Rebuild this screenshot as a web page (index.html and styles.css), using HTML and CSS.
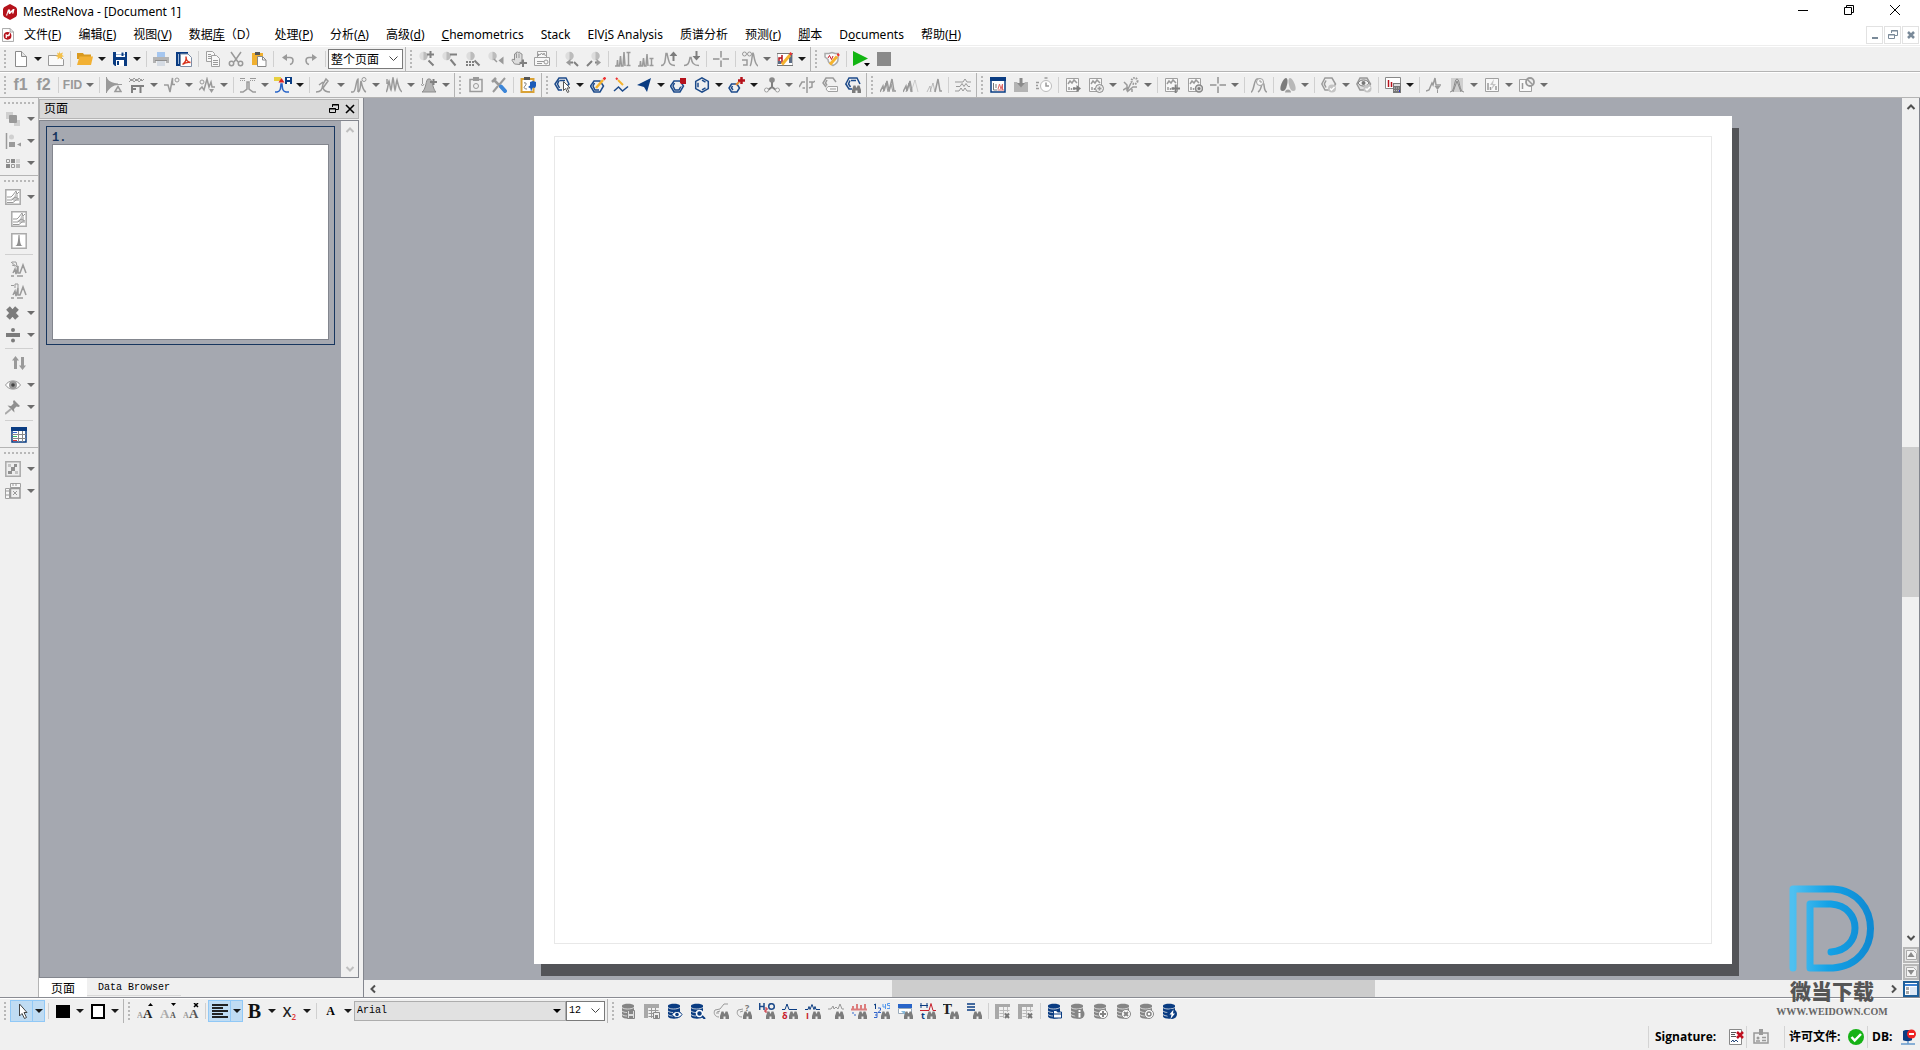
FILE: index.html
```html
<!DOCTYPE html>
<html lang="zh-CN">
<head>
<meta charset="utf-8">
<title>MestReNova - [Document 1]</title>
<link rel="stylesheet" href="styles.css">
</head>
<body>
<svg class="defs" aria-hidden="true">
<symbol id="logo" viewBox="0 0 16 16"><path fill="#b5121b" d="M8 0l6 3.300 1 1.700v6l-1 1.700L8 16l-6-3.300L1 11V5l1-1.700z"/><path fill="#fff" d="M4 11.500l2-6h2l.5 2 2.500-2.500h1.500l-1 4.500H10l.5-2L8 10H7l-.8-2-1 3.500z"/></symbol>
<symbol id="doclogo" viewBox="0 0 14 16"><path fill="#fff" stroke="#999" d="M.5.5h9l4 4v11H.5z"/><path fill="none" stroke="#999" d="M9.500.5v4h4"/><circle cx="6.500" cy="9" r="4.500" fill="#b5121b"/><path stroke="#fff" stroke-width="1.500" fill="none" d="M5 11.500V8l2 1 1.500-2v2"/></symbol>
<symbol id="bino" viewBox="0 0 16 16"><path fill="#7c7c7c" d="M7 16v-3l1.500-4.500h2l.6 2h.8l.6-2h2L16 13v3h-3.500v-2.500h-2V16z"/></symbol>
<symbol id="new" viewBox="0 0 16 16"><path fill="#fff" stroke="#8a8a8a" d="M2.500.5h6l5 5v10h-11z"/><path fill="#e4e4e4" stroke="#8a8a8a" d="M8.500.5v5h5"/></symbol>
<symbol id="newpage" viewBox="0 0 16 16"><path fill="#fafafa" stroke="#999" d="M.5 4.500h11l4 4v6H.5z"/><path fill="#f4c04a" d="M11 0l1.200 2.500L15 1.500 14 4l2 1.200-2.500.8.5 2.500L11.500 7 9.500 8.500 9.800 6 7.500 5l2.300-1-.8-2.500L11 2.500z"/></symbol>
<symbol id="open" viewBox="0 0 16 16"><path fill="#d99a20" d="M0 2h6l1 1.500h7V8H0z"/><path fill="#f2b134" d="M2.500 5.500H16l-2 8.500H0z"/></symbol>
<symbol id="save" viewBox="0 0 16 16"><path fill="#0a3c82" d="M1 1h14v14H3l-2-2z"/><path fill="#fff" d="M4 1h9v5H4zM4 9h8v6H4z"/><path fill="#9db6d6" d="M4 3h9v1H4z"/><path fill="#0a3c82" d="M9.500 1.500h2V5h-2zM5 10h2v4H5z"/></symbol>
<symbol id="print" viewBox="0 0 16 16"><path fill="#a5c6ef" d="M4 1h8v5H4z"/><path fill="#b4b4b4" d="M0 6h16v6h-3v-2H3v2H0z"/><path fill="#8f8f8f" d="M2 9h12v1H2z"/><path fill="#d5dbe3" d="M4 10h8v5H4z"/></symbol>
<symbol id="pdf" viewBox="0 0 16 16"><path fill="#0a3c82" d="M0 1h12v14H0z"/><path fill="#fff" d="M4.500 3H12l3.500 3.500v9h-11z"/><path fill="none" stroke="#7d8da5" d="M4.500 3H12l3.500 3.500v9h-11z"/><path fill="none" stroke="#d8331d" stroke-width="1.400" d="M6.500 13.500c3-2 4-5 3.500-8 0 3 1.500 5.500 4.500 6-3-.5-5 0-8 2z"/><path fill="#9db6d6" d="M2 3h1v10H2z"/></symbol>
<symbol id="copy" viewBox="0 0 16 16"><path class="gw" d="M1.500.5h6l2 2v8h-8z"/><path class="gw" d="M6.500 4.500h5l3 3v8h-8z"/><path class="g" d="M8 9.500h5M8 11.500h5M8 13.500h5M3 3.500h3M3 5.500h3M3 7.500h3"/></symbol>
<symbol id="cut" viewBox="0 0 16 16"><path class="g2" d="M3 1l7 10M13 1L6 11"/><circle class="g2" cx="3.500" cy="12.500" r="2.200"/><circle class="g2" cx="12.500" cy="12.500" r="2.200"/></symbol>
<symbol id="paste" viewBox="0 0 16 16"><path fill="#f0b030" d="M1 2h11v12H1z"/><path fill="#555" d="M4 1h5v3H4z"/><path fill="#fff" stroke="#888" d="M6.500 5.500h5l3.500 3.500v6.500H6.500z"/><path fill="none" stroke="#888" d="M11.500 5.500V9H15"/></symbol>
<symbol id="undo" viewBox="0 0 16 16"><path class="g2" d="M4 6.500h6c4 0 4 5.500 0 7"/><path class="gf" d="M2 6.500L7 3v7z"/></symbol>
<symbol id="redo" viewBox="0 0 16 16"><path class="g2" d="M12 6.500H6c-4 0-4 5.500 0 7"/><path class="gf" d="M14 6.500L9 3v7z"/></symbol>
<symbol id="lens" viewBox="0 0 16 16"><circle cx="4.500" cy="5" r="4.200" fill="#ddd"/><path fill="#bcbcbc" d="M4.500.8a4.200 4.200 0 010 8.400z"/></symbol>
<symbol id="zin" viewBox="0 0 16 16"><use href="#lens"/><path class="g3" d="M8 3.500h7M11.500 0v7M9.500 9.500l5 5"/></symbol>
<symbol id="zout" viewBox="0 0 16 16"><use href="#lens"/><path class="g3" d="M8 3.500h7M8.500 8.500l5 6"/></symbol>
<symbol id="zsel" viewBox="0 0 16 16"><use href="#lens" x="1"/><path class="g3" stroke-dasharray="2 1" d="M1 11h8M1 14h8"/><path class="g3" d="M9.500 9.500l5 5"/></symbol>
<symbol id="zprev" viewBox="0 0 16 16"><use href="#lens"/><path class="g2" d="M6 8l3 3"/><path class="gf" d="M10.500 9.500l5-4v8z"/></symbol>
<symbol id="hand" viewBox="0 0 16 16"><path fill="#ddd" stroke="#8f8f8f" d="M3.500 13L.8 9l1-1L3.500 9V3l1.500-.5V1.500L6.500 1l.7.5 1.300-.5 1 1.500 1.500.5v6l-2 4.500z"/><path class="g" d="M5.500 2.500V7M8 2.500V7"/><path class="g3" d="M8.500 12H16M12 8.500V16"/></symbol>
<symbol id="zpage" viewBox="0 0 16 16"><path class="gw" d="M3.500.5h9v8h-9z"/><path class="gw" d="M.5 6.500h15v8H.5z"/><path class="g" d="M4.500 5V3l1.500 1 1.500-2L9 4l1-2 1.500 3M3 10.500h7M3 12.500h5"/><circle class="g" cx="12" cy="11" r="2"/></symbol>
<symbol id="zl" viewBox="0 0 16 16"><use href="#lens" x="2"/><path class="g3" d="M11 11l4 4M6 11.500h4"/><path class="gf" d="M3 11.500L7.500 8v7z"/></symbol>
<symbol id="zr" viewBox="0 0 16 16"><use href="#lens" x="5"/><path class="g3" d="M1 15l5-5M9 11.500h3"/><path class="gf" d="M15 11.500L10.500 8v7z"/></symbol>
<symbol id="pkup" viewBox="0 0 16 16"><path class="g2" d="M0 15h2l.5-6 .5 6h1.500L5.500 5l1 10H8L9 1l1 14"/><path class="g2" d="M11.500 1.500h4M13.500 1.500v13M11.500 14.500h4"/></symbol>
<symbol id="pkdn" viewBox="0 0 16 16"><path class="g2" d="M0 15h2l.5-5 .5 5h1.500L5.500 7l1 8H8L9 3l1 12"/><path class="g2" d="M11.500 7.500h4M13.500 7.500v7M11.500 14.500h4"/></symbol>
<symbol id="pka" viewBox="0 0 16 16"><path class="g2" d="M0 14.500c4 0 4-3 5-12h1c2 9 2 12 8 12"/><path class="g3" d="M12.500 10V2.500"/><path class="df" d="M8.500 5l4-4.500 4 4.500z"/></symbol>
<symbol id="pkb" viewBox="0 0 16 16"><path class="g2" d="M0 14.500c4 0 5-2 6-8h1c1 5 2 8 8 8"/><path class="g3" d="M12.500 0v7"/><path class="df" d="M8.500 5l4 4.500 4-4.500z"/></symbol>
<symbol id="cross" viewBox="0 0 16 16"><path stroke="#aaa" stroke-width="2" d="M8 0v6.500M8 9.500V16M0 8h6.500M9.500 8H16"/></symbol>
<symbol id="multi" viewBox="0 0 16 16"><circle class="g" cx="2.500" cy="3" r="2"/><circle class="g" cx="7.500" cy="3" r="2"/><path class="g2" d="M0 9h5v5H1M8 15c2-2 2-13 3-13s1 11 5 13"/></symbol>
<symbol id="specedit" viewBox="0 0 16 16"><path fill="#fff" stroke="#777" d="M0 2.500h16v12H0z"/><path stroke="#b5121b" stroke-width="1.500" fill="none" d="M2 12V7h3V4v8"/><path fill="#5b6b85" d="M12 3h3v9h-3zM1 10h3v3H1z"/><path class="y3" d="M5 13.500l8-9.500"/><path stroke="#e33" stroke-width="2.500" d="M13 3.500L14.500 2"/></symbol>
<symbol id="shield" viewBox="0 0 16 16"><path fill="#fafafa" stroke="#aaa" stroke-width="1.500" d="M1 2.500h4l3-1 3 1h3v6c0 3-3 5-5 6-3-1.500-5-3-5-6L1 6z"/><path class="r" d="M4 7l1.500-2.500 2 4L9 5"/><path class="y3" d="M6 13.500l7-8"/><path stroke="#e33" stroke-width="2.500" d="M13.500 4.500L15 3"/></symbol>
<symbol id="play" viewBox="0 0 18 16"><path fill="#12b512" d="M1 0l15 7.500L1 15z"/><path fill="#000" d="M12 12h6l-3 3.500z"/></symbol>
<symbol id="stop" viewBox="0 0 16 16"><path fill="#8a8a8a" d="M1 1h14v14H1z"/></symbol>
<symbol id="ph1" viewBox="0 0 16 16"><path class="gf" d="M1 1c2 4 6 5 11 5.500V8C7 8 4 11 1 15z"/><path class="g" d="M.5 0v16M6 7.500h10"/><path class="g2" d="M9 14.500l3-5 3 5z"/></symbol>
<symbol id="ft" viewBox="0 0 16 16"><path class="g" d="M0 1l3 3 2-3 3 3 2-3 3 3 2-2M0 5l3-3 2 3 3-3 2 3 3-3"/><path class="g3" d="M3 16V9h5M3 12h4M8 9h7M11.500 9v7"/></symbol>
<symbol id="ph2" viewBox="0 0 16 16"><path class="g2" d="M0 8h4l2 7L8.500 1v6.500H11"/><circle class="g" cx="13" cy="3" r="2"/></symbol>
<symbol id="bl" viewBox="0 0 16 16"><circle class="g" cx="3" cy="5" r="2"/><path class="g2" d="M0 13l3-3 2 3 3-11 2 8 2-5 1 5h3"/><path class="gf" d="M10 12h5l-2.500 4z"/></symbol>
<symbol id="ref" viewBox="0 0 16 16"><path class="g2" d="M0 15h3l4-3V5h2v7l4 3h3"/><path class="g" stroke-dasharray="1 1" d="M0 3.500h5M10 3.500h6"/><path class="g" d="M0 1.500h5M10 1.500h6"/></symbol>
<symbol id="refc" viewBox="0 0 18 16"><path fill="#e8d040" d="M0 0h7v4H0z"/><path fill="none" stroke="#2864c8" stroke-width="1.500" d="M1 15h2c4-1 3.500-4 4-8h1c.5 4 0 7 4 8h3"/><path fill="#d22" d="M4.500 5.500L7.500 1l3 4.500z"/><path fill="#0a3c82" d="M11 0h7v7h-7z"/><path fill="#fff" d="M13 1h3v2h-3zM13 5h3v2h-3z"/></symbol>
<symbol id="int" viewBox="0 0 16 16"><path class="g2" d="M0 15c5 0 6-2 7-8l3-5 2 2-5 7c1 3 3 4 7 4M7 5L3 8"/></symbol>
<symbol id="int2" viewBox="0 0 16 16"><path class="g2" d="M0 15h2c3 0 3-13 5-13v13M7 15c3-1 2-7 3-11 1 5 2 10 5 11"/><circle class="g" cx="13" cy="2.500" r="2"/></symbol>
<symbol id="int3" viewBox="0 0 16 16"><path class="g2" d="M0 15c2-2 2-9 3-11 1 3 1 7 2 9 1-3 1-9 2-12 1 3 1 9 2 12 1-3 1-7 2-10 1 4 2 10 5 12M1 2v5"/></symbol>
<symbol id="int4" viewBox="0 0 16 16"><path class="g" d="M1.500 1v6M0 7l1.500 2L3 7"/><path fill="#b4b4b4" stroke="#8c8c8c" d="M1 15c4-2 4-13 6-13h2c2 0 3 11 6 13z"/><path class="g3" d="M9 5h7M12.500 2v6"/></symbol>
<symbol id="clip" viewBox="0 0 16 16"><path class="g2" d="M2 2.500h12v12H2z"/><path class="gf" d="M5 0h6v4H5z"/><circle class="g" cx="8" cy="9" r="2.500"/></symbol>
<symbol id="tools" viewBox="0 0 16 16"><path stroke="#9a9a9a" stroke-width="2.500" d="M3 3l10 10M1 5l4-4"/><path stroke="#9a9a9a" stroke-width="2" d="M14 1L8 8M2 15l5-6"/><path stroke="#3b85d8" stroke-width="4" stroke-linecap="round" d="M10 9.500l4 4.500"/></symbol>
<symbol id="clipc" viewBox="0 0 16 16"><path fill="#fff" stroke="#d9a236" stroke-width="2" d="M1.500 2h12v13h-12z"/><path fill="#555" d="M4 0h6v3H4z"/><path stroke="#777" fill="none" d="M4 6c2-1 3 1 1 3s0 3 2 3"/><path fill="#1c5bb8" d="M10 5l3-1 3 1v4l-1 2-2-.5L12 12l-1 3-.5-3.500L8 10l2-1.500z"/></symbol>
<symbol id="hexcur" viewBox="0 0 18 16"><path class="n2" d="M11 9H13L15 7 12 1H5L1 7l3.500 6H8M5 3.500L3.500 7l2 4M5.500 3.500H11"/><path fill="#fff" stroke="#555" d="M9.500 4.500v9l2-2 2 4 1.500-.8-2-3.700H16z"/></symbol>
<symbol id="hexpen" viewBox="0 0 16 16"><path class="n2" d="M4 4H10l3.500 5-3.500 6H4L.5 9zM4.500 6L3 9l2 4h4"/><path stroke="#f5b32e" stroke-width="2.500" d="M6 11l7-8"/><path stroke="#e33" stroke-width="2.500" d="M13.500 2.500L15.500.5"/></symbol>
<symbol id="chain" viewBox="0 0 16 16"><path class="n2" d="M1 14l4.500-4 4 4L15 9.500"/><path stroke="#f5b32e" stroke-width="2" d="M10 8L5 3"/><path stroke="#e33" stroke-width="2" d="M4.500 2.500L3 1"/></symbol>
<symbol id="wedge" viewBox="0 0 16 16"><path fill="#0a3c82" d="M15 1L11 15 8 10 1 8z"/></symbol>
<symbol id="hexat" viewBox="0 0 18 16"><path class="n2" d="M4 4H10l3.500 5-3.500 6H4L.5 9zM4.500 6L3 9l2 4h4l2-4"/><path fill="#b5121b" d="M10 1h6v6h-6z"/><circle cx="9" cy="8" r="2.200" fill="#eee"/></symbol>
<symbol id="benz" viewBox="0 0 16 16"><path class="n2" d="M8 .8l6.300 3.600v7.200L8 15.200l-6.300-3.600V4.400zM4 5.800v4.400M8 12.800l3.500-2M8 3.200l3.500 2"/></symbol>
<symbol id="hexadd" viewBox="0 0 18 16"><path class="n2" d="M3.500 7H9l2.500 4L9 15H3.500L1 11zM4.500 9L3.500 11l1.500 2"/><path stroke="#e88a30" stroke-width="2" d="M8 8l4-4"/><path stroke="#b5121b" stroke-width="2.500" d="M10 3.500h7M13.500 0v7"/></symbol>
<symbol id="mol" viewBox="0 0 16 16"><circle cx="8" cy="3" r="2.800" fill="#8a8a8a"/><path class="g3" d="M8 5v5M4 13l4-3 4 3"/><circle class="gw" cx="2.500" cy="13" r="2"/><circle class="gw" cx="13.500" cy="13" r="2"/></symbol>
<symbol id="mirror" viewBox="0 0 16 16"><path class="g2" d="M8 0v16M6 5H3L0 10M6 11H3.500M10 5h3v5l-3 1M13 6l3-2"/></symbol>
<symbol id="hexlab" viewBox="0 0 16 16"><path class="g2" d="M4 10L1 6l3-5h7l3 4M5 3L3.500 6 5 8.500"/><path class="gw" d="M6 9.500h9.500v5H6l-2-2.500z"/><path class="g" d="M8 12h6"/></symbol>
<symbol id="hexfind" viewBox="0 0 16 16"><path class="n2" d="M7 12H4L.8 7 4 1h8l3 6M5 3.500L3.500 7l2 3M6 3.500h5"/><use href="#bino"/></symbol>
<symbol id="p1" viewBox="0 0 16 16"><path class="g2" d="M0 15l3-6 1 5 3-10 2 10 3-12 2 12h2"/><path class="g" d="M3 15l3-9 2 9M9 15l2-8 2 8"/></symbol>
<symbol id="p2" viewBox="0 0 16 16"><path class="g2" d="M0 15l3-6 1 5 3-10 2 11"/><path class="g" d="M3 15l3-9 2 9"/><path class="g" opacity=".4" d="M8 15l4-12 3 12"/></symbol>
<symbol id="p3" viewBox="0 0 16 16"><path class="g" opacity=".6" d="M1 15l3-6 1 6M4 15l3-9 2 9"/><path class="g2" d="M9 15l3-13 2 12h2"/></symbol>
<symbol id="p4" viewBox="0 0 16 16"><path class="g" d="M0 5h8l2-3 2 3h4M1 9.500h4l2-3 2 3 2-3 2 3h2M0 14h4l2-3 2 3 2-3 2 3h4"/></symbol>
<symbol id="winchart" viewBox="0 0 16 16"><path fill="#fff" stroke="#0a3c82" stroke-width="1.500" d="M1 1h14v14H1z"/><path fill="#0a3c82" d="M0 0h16v4H0z"/><path stroke="#777" fill="none" d="M3.500 6v7h4M5 8h2M5 10h2"/><path stroke="#d66" fill="none" d="M8 12l1.500-5L11 12l1.500-5v6M8 13h6"/></symbol>
<symbol id="dl" viewBox="0 0 16 16"><path fill="#b4b4b4" d="M1 5h3l4 5 4-5h3v10H1z"/><path fill="#8a8a8a" d="M6.500 1h3v5H12L8 10.500 4 6h2.500z"/></symbol>
<symbol id="clock" viewBox="0 0 16 16"><circle cx="10" cy="9" r="5.500" fill="#fff" stroke="#bbb"/><path class="g2" d="M10 5.500V9h3M8.500 1h3M0 5.500h3M0 8.500h2M0 11.500h3"/></symbol>
<symbol id="box" viewBox="0 0 16 16"><path class="gw" d="M1.500 1.500h12v13h-12z"/><path class="g2" d="M3 7l2-3 2 2 2-3 3 3"/><path class="g2" d="M4 13v-3M6.500 13v-2M9 13v-3"/></symbol>
<symbol id="boxgo" viewBox="0 0 16 16"><use href="#box"/><path class="g3" d="M8 11.500h5"/><path class="df" d="M11.500 8l4.500 3.500-4.500 3.500z"/></symbol>
<symbol id="boxplus" viewBox="0 0 16 16"><use href="#box"/><circle cx="11.500" cy="11.500" r="4" fill="#eee" stroke="#888"/><path class="g2" d="M9.500 11.500h4M11.500 9.500v4"/></symbol>
<symbol id="boxadd" viewBox="0 0 16 16"><use href="#box"/><path class="g3" d="M7.500 11.500H16M11.700 7.500V16"/></symbol>
<symbol id="boxusr" viewBox="0 0 16 16"><use href="#box"/><circle cx="12" cy="11.500" r="3.500" fill="#ddd" stroke="#888" stroke-width="1.500"/><circle class="df" cx="12" cy="11.500" r="1.500"/></symbol>
<symbol id="gearpk" viewBox="0 0 16 16"><circle cx="11.500" cy="4" r="3" fill="none" stroke="#9a9a9a" stroke-width="2" stroke-dasharray="1.500 1"/><path class="g2" d="M1 5l3 3v6l4-8M0 13l5-3M4 15l6-5h4M9 12v3"/></symbol>
<symbol id="peakclk" viewBox="0 0 16 16"><path class="g2" d="M0 15c3 0 3-13 6-13h3M7 15c4-2 3-9 5-9s0 8 4 9"/><circle class="gw" cx="9" cy="5" r="3.500"/><path class="g" d="M9 3v2h2"/></symbol>
<symbol id="drops" viewBox="0 0 16 16"><path fill="#7c7c7c" d="M6 1c1.500 0 2 3 1 7s-2 6-4.500 6S0 11 1 8s3-7 5-7z"/><path fill="#b8b8b8" d="M10 1c2 0 4 4 5 7s1 6-1.500 6S10 12 9 8s-.5-7 1-7z"/><path fill="#a0a0a0" d="M5 15.500c0-4 6-4 6 0z"/></symbol>
<symbol id="hexok" viewBox="0 0 16 16"><path class="g2" d="M4 1h7l3.500 6-3.500 6H4L.8 7zM5 3.500L3.300 7 5 10.500"/><circle cx="11" cy="11.500" r="4" fill="#c4c4c4"/><path stroke="#fff" stroke-width="1.500" fill="none" d="M9 11.500l1.500 1.500 3-3"/></symbol>
<symbol id="hexok2" viewBox="0 0 16 16"><path fill="#ddd" stroke="#999" stroke-width="1.500" d="M4 1h7l3.500 6-3.500 6H4L.8 7z"/><path fill="#f4f4f4" stroke="#777" d="M2 6c2-4 9-4 11 0-2 4-9 4-11 0z"/><circle cx="7.500" cy="6" r="2" fill="#777"/><circle cx="11.500" cy="11.500" r="4" fill="#c4c4c4"/><path stroke="#fff" stroke-width="1.500" fill="none" d="M9.500 11.500L11 13l3-3"/></symbol>
<symbol id="calc" viewBox="0 0 16 16"><path fill="#fff" stroke="#888" d="M.5.5h15v11H.5z"/><path stroke="#b5121b" stroke-width="1.500" d="M3.500 3v7M6.500 5v5"/><path fill="#777" d="M8 6h8v10H8z"/><path fill="#ddd" d="M9 7h6v2H9z"/><path stroke="#bbb" stroke-dasharray="1 1" d="M9 11h6M9 13.500h6"/><path fill="#33c" d="M14 13h1v2h-1z"/></symbol>
<symbol id="pkm" viewBox="0 0 16 16"><path class="g2" d="M0 14l3-1 3-7 1 2 2-7 1 7h5"/><path class="gf" d="M8.500 9h6l-3 4zM11 13h1v3h-1z"/></symbol>
<symbol id="pkf" viewBox="0 0 16 16"><path fill="#d0d0d0" d="M2 1h12v14H2z"/><path fill="none" stroke="#8a8a8a" d="M1 15c5 0 4-13 7-13s2 13 7 13M4 15L8 4l4 11"/></symbol>
<symbol id="boxbolt" viewBox="0 0 16 16"><path class="gw" d="M1.500 1.500h13v13h-13z"/><path class="g2" d="M4 13V6M6.500 13v-3M12 13V9"/><path fill="#c4c4c4" d="M10 2L6 8h3l-2 5 5-6H9z"/></symbol>
<symbol id="boxno" viewBox="0 0 16 16"><path class="gw" d="M.5 2.500h12v12H.5z"/><path class="g2" d="M3.500 12V6"/><circle cx="11" cy="5" r="4" fill="#eee" stroke="#9a9a9a" stroke-width="1.800"/><path class="g2" d="M8 2l6 6"/></symbol>
<symbol id="order" viewBox="0 0 16 16"><path fill="#d0d0d0" d="M1 1h7v7H1zM9 9h6v6H9z"/><rect x="4" y="4" width="8" height="8" rx="1" fill="#999"/></symbol>
<symbol id="align" viewBox="0 0 16 16"><path class="g2" d="M1.500 0v16"/><circle cx="6.500" cy="4" r="2.500" fill="#d0d0d0"/><path class="gf" d="M4 9h6v5H4zM16 9.500v4L12 11.500z"/></symbol>
<symbol id="dist" viewBox="0 0 16 16"><path fill="#8a8a8a" d="M1 9h4v4H1zM6 4h4v4H6z"/><path fill="#b5b5b5" d="M11 9h4v4h-4z"/><path fill="#d5d5d5" d="M11 4h4v4h-4z"/><path class="g" d="M1.500 4.500h3v3h-3zM6.500 9.500h3v3h-3z"/></symbol>
<symbol id="stk" viewBox="0 0 16 16"><path fill="#fff" stroke="#aaa" stroke-width="1.500" d="M.8.800h14.400v14.400H.8z"/><path fill="#c8c8c8" d="M6 10l3-2 2-5 2 3v5l-4 1z"/><path class="g" d="M2 8h4l2-2 3-4 1 3 2-2M2 11h5l3-3 4 2M2 13.500h6l3-2.500h3"/></symbol>
<symbol id="sgl" viewBox="0 0 16 16"><path fill="#fff" stroke="#aaa" stroke-width="1.500" d="M.8.800h14.400v14.400H.8z"/><path fill="#8f8f8f" d="M4 13c3 0 3-6 3.500-11h1C9 7 9 13 12 13z"/></symbol>
<symbol id="st1" viewBox="0 0 16 16"><path class="g" d="M0 1l6 5M1 4l3 1M1 1h4l1 4"/><path class="g2" d="M0 15h3M2 12l2-4 1 5 2-8v7h2l3-8 3 8M6 15h6"/></symbol>
<symbol id="st2" viewBox="0 0 16 16"><path class="g" d="M0 2.500h3M4 5V1h3v4"/><path class="g2" d="M0 15h3M2 12l2-4 1 5 2-8v7h2l3-8 3 8M6 15h6"/></symbol>
<symbol id="xx" viewBox="0 0 16 16"><path stroke="#7c7c7c" stroke-width="5" d="M3 3l9 10M12 3L3 13"/></symbol>
<symbol id="divi" viewBox="0 0 16 16"><path stroke="#7c7c7c" stroke-width="4" d="M1 8h14"/><circle class="df" cx="8" cy="3" r="2"/><circle class="df" cx="8" cy="13.500" r="2"/></symbol>
<symbol id="updn" viewBox="0 0 16 16"><path class="gf" d="M4.500 1L8 5.500H6V14H3V5.500H1zM11.500 15L8 10.500h2V2h3v8.500h2z"/></symbol>
<symbol id="eye" viewBox="0 0 16 16"><path fill="#fff" stroke="#999" d="M.5 8C4 2.500 12 2.500 15.500 8 12 13.500 4 13.500.5 8z"/><circle cx="8" cy="8" r="4" fill="#999"/><circle cx="8" cy="8" r="1.800" fill="#444"/></symbol>
<symbol id="pin" viewBox="0 0 16 16"><path fill="#8f8f8f" d="M9 1l6 6-1.500 1-2-.5L9 10l.5 3.500-7-7L6 7l2.500-2.500-.5-2z"/><path stroke="#aaa" stroke-width="2" d="M0 15l6-5"/></symbol>
<symbol id="tbl" viewBox="0 0 16 16"><path fill="#fff" stroke="#0a3c82" stroke-width="1.500" d="M1 1h14v14H1z"/><path fill="#0a3c82" d="M0 0h16v4H0z"/><path stroke="#888" d="M7.500 4v11M11.500 4v11M1 7.500h14M1 11.500h14"/><path stroke="#36c" d="M2 5.500h4"/><path stroke="#3b6" d="M2 9.500h4"/><path stroke="#d33" d="M2 13.500h4"/></symbol>
<symbol id="chk" viewBox="0 0 16 16"><path fill="#eee" stroke="#aaa" stroke-width="1.500" d="M.8.800h14.400v14.400H.8z"/><path fill="#909090" d="M9 3h3v3H9zM6 6h4v4H6zM3 10h4v3H3z"/><path fill="#c4c4c4" d="M3 3h3v3H3zM10 10h3v3h-3z"/></symbol>
<symbol id="frm" viewBox="0 0 16 16"><path class="gw" d="M5.500.5h10v4h-10zM.5 5.500h4v10h-4z"/><path fill="#eee" stroke="#999" stroke-width="1.500" d="M5.500 5.500h9.500v9.500H5.500z"/><path class="g" d="M8 0v3M11 0v3M1 8h3M1 12h3M8 8l4 4M12 8l-4 4"/></symbol>
<symbol id="cur" viewBox="0 0 16 16"><path fill="#fff" stroke="#444" d="M5.500 1v12l2.500-2.500 2.500 5 2-1-2.500-5H13z"/></symbol>
<symbol id="fill" viewBox="0 0 16 16"><path d="M1 2h14v13H1z"/></symbol>
<symbol id="line" viewBox="0 0 16 16"><path fill="#fff" stroke="#000" stroke-width="2" d="M2 2h12v13H2z"/></symbol>
<symbol id="fa1" viewBox="0 0 16 16"><text class="fs" x="0" y="15">A</text><text class="fl" x="6" y="15">A</text><path d="M11 3h5l-2.500-3z"/></symbol>
<symbol id="fa2" viewBox="0 0 16 16"><text class="fl dim" x="0" y="15">A</text><text class="fs dk" x="10" y="15">A</text><path d="M11 0h5l-2.500 3z"/></symbol>
<symbol id="fa3" viewBox="0 0 16 16"><text class="fs" x="0" y="15">A</text><text class="fl dk" x="6" y="15">A</text><path stroke="#000" stroke-width="1.500" d="M11 0l4 4M15 0l-4 4"/></symbol>
<symbol id="al" viewBox="0 0 16 16"><path stroke="#222" stroke-width="2" d="M0 2h16M0 5h11M0 8h16M0 11h11M0 14h16"/></symbol>
<symbol id="cyl" viewBox="0 0 16 16"><path fill="currentColor" d="M1 2.500C2 0 12 0 13 2.500v11C12 16.500 2 16.500 1 13.500z"/><path stroke="#eee" fill="none" stroke-width=".8" d="M1 4.500c2 2 9 2 12 0M1 8c1 1 3 1.500 5 1.500M1 11.500c1 1 3 1.500 5 1.500"/></symbol>
<symbol id="dbs" viewBox="0 0 16 16"><use href="#cyl"/><path fill="#ddd" stroke="currentColor" d="M6.500 7.500h7v8h-7z"/><path fill="currentColor" d="M8 8h4v3H8zM8 13h4v2H8z"/></symbol>
<symbol id="dbe" viewBox="0 0 16 16"><use href="#cyl"/><path fill="#fff" stroke="currentColor" d="M5 11.500c2-4 8-4 10 0-2 4-8 4-10 0z"/><circle cx="10" cy="11.500" r="1.800" fill="currentColor"/></symbol>
<symbol id="dbq" viewBox="0 0 16 16"><use href="#cyl"/><circle cx="9.500" cy="10.500" r="3" fill="currentColor" stroke="#fff" stroke-width="1.500"/><path stroke="currentColor" stroke-width="2" d="M12 13l3 3"/></symbol>
<symbol id="dbf" viewBox="0 0 16 16"><use href="#cyl"/><path fill="#fff" stroke="currentColor" d="M6.500 7.500h3l1 1.500h4v6h-8z"/><path stroke="currentColor" d="M7 11h8"/></symbol>
<symbol id="dbc" viewBox="0 0 16 16"><use href="#cyl"/><circle cx="10" cy="11" r="4.500" fill="#fff" stroke="currentColor"/></symbol>
<symbol id="dbi" viewBox="0 0 16 16"><use href="#cyl"/><circle cx="9.500" cy="11" r="5" fill="currentColor"/><path stroke="#fff" stroke-width="2" d="M9.500 10v4.500M9.500 7v2"/></symbol>
<symbol id="dbp" viewBox="0 0 16 16"><use href="#dbc"/><path stroke="currentColor" stroke-width="2" d="M7 11h6M10 8v6"/></symbol>
<symbol id="dbx" viewBox="0 0 16 16"><use href="#dbc"/><path stroke="currentColor" stroke-width="2" d="M8 9l4 4M12 9l-4 4"/></symbol>
<symbol id="dbg" viewBox="0 0 16 16"><use href="#dbc"/><circle cx="10" cy="11" r="2" fill="none" stroke="currentColor" stroke-width="1.500"/></symbol>
<symbol id="dbb" viewBox="0 0 16 16"><use href="#cyl"/><circle cx="10" cy="11" r="5" fill="currentColor"/><path fill="#fff" d="M11.500 6.500l-4 5h2L8.500 16l4.500-5.500h-2z"/></symbol>
<symbol id="grid" viewBox="0 0 16 16"><path fill="#a8a8a8" d="M0 1h15v4H0zM0 5h4v10H0z"/><path class="g" d="M4.500 7.500h10M4.500 10.500h10M4.500 13.500h5M7.500 5v10M11.500 5v6"/></symbol>
<symbol id="gs" viewBox="0 0 16 16"><use href="#grid"/><path fill="#eee" stroke="#888" d="M9.500 9.500h6v6h-6z"/><path fill="#888" d="M11 12h3v3h-3z"/></symbol>
<symbol id="gx" viewBox="0 0 16 16"><path fill="#a8a8a8" d="M0 1h15v3H0zM0 4h4v12H0z"/><path stroke="#bbb" fill="none" d="M4.500 7.500h10M4.500 10.500h5M4.500 13.500h4M8.500 4v11M12.500 4v5"/><path stroke="#777" stroke-width="2" d="M10 10.500l4 4.500M14 10.500l-4 4.500"/></symbol>
<symbol id="f1" viewBox="0 0 16 16"><path class="g" d="M6 14c-4 0-6-4-4-7l5-1 4-5h4M4 9l3-1M6 10H3"/><use href="#bino"/></symbol>
<symbol id="f2" viewBox="0 0 16 16"><path class="g" d="M6 14c-4 0-6-4-4-7l5-1M4 9l3-1"/><text class="it" x="9" y="8" fill="#777">?</text><use href="#bino"/></symbol>
<symbol id="f3" viewBox="0 0 16 16"><path class="n2" d="M.7 0v7M5 0v7M.7 3.500H5"/><path class="r" d="M6 5h2v2H6v2h2.500"/><circle class="n2" cx="12.500" cy="3.500" r="2.800"/><use href="#bino"/></symbol>
<symbol id="f4" viewBox="0 0 16 16"><path class="n" d="M0 6.500h3L5 1l2 5.500h8"/><text class="it rd" x="0" y="16">δ</text><use href="#bino"/></symbol>
<symbol id="f5" viewBox="0 0 16 16"><path class="n" d="M0 6.500h3l1-3 1 3 2-5 2 5 1-3 1 3h4"/><text class="it rd" x="1" y="16">J</text><use href="#bino"/></symbol>
<symbol id="f6" viewBox="0 0 16 16"><path class="g" d="M0 6h3l2-3 1 3 2-2 2 2 2-5 2 5h2"/><use href="#bino"/></symbol>
<symbol id="f7" viewBox="0 0 16 16"><path stroke="#dc7c7c" stroke-width="2" d="M0 6.500h16M2 6V3M6 6V1M10 6V2M14 6V1"/><path stroke="#36c" d="M1 10h2M3 12h2"/><use href="#bino"/></symbol>
<symbol id="f8" viewBox="0 0 16 16"><path fill="none" stroke="#0a3c82" d="M0 2l1.500-1v5"/><path fill="none" stroke="#36c" d="M4 5h2.500v2L4 9.500h3M0 9.500h3v5H0M1 12h2"/><path fill="none" stroke="#59e" d="M9 1v3h3M11.500 1v5M16 .5h-2.500v2H16v3h-3"/><use href="#bino"/></symbol>
<symbol id="f9" viewBox="0 0 16 16"><path fill="#2864c8" d="M1 1h14v4H1z"/><path fill="#fff" stroke="#9ab" d="M1.500 5.500h13v5h-13z"/><path fill="#8bd" d="M4 8h4v4z"/><use href="#bino"/></symbol>
<symbol id="f10" viewBox="0 0 16 16"><path class="n" d="M0 2.500h8M1 0v5M7 0v5"/><path class="r" d="M0 7.500h9l2-7 2 7h3"/><text class="it nv" x="1" y="16">t</text><use href="#bino"/></symbol>
<symbol id="f11" viewBox="0 0 16 16"><text class="ft" x="-1" y="11">T</text><use href="#bino"/></symbol>
<symbol id="f12" viewBox="0 0 16 16"><path stroke="#0a3c82" stroke-width="1.500" d="M1 1h8M1 4h8M1 7h8"/><use href="#bino"/></symbol>
<symbol id="sig" viewBox="0 0 16 16"><path fill="#fff" stroke="#888" d="M1.500.5h12v15h-12z"/><path stroke="#555" d="M3 3.500h5M3 5.500h4M3 7.500h5"/><path stroke="#247" fill="none" d="M3 13l2-2 1 2 2-2 2 2"/><path stroke="#c01020" stroke-width="2.500" d="M9 3l6 6M15 3L9 9"/></symbol>
<symbol id="badge" viewBox="0 0 16 16"><path fill="#eee" stroke="#999" stroke-width="1.500" d="M1 4h14v10H1z"/><path class="gf" d="M6 0h4v6H6z"/><path class="g2" d="M9 8.500h4M9 11.500h4M3 12h4"/><circle class="gf" cx="5" cy="9" r="1.500"/></symbol>
<symbol id="ok" viewBox="0 0 16 16"><circle cx="8" cy="8" r="8" fill="#16b216"/><path stroke="#fff" stroke-width="2.500" fill="none" d="M3.500 8l3.200 3.500L13 5"/></symbol>
<symbol id="dbno" viewBox="0 0 16 16"><path fill="#0a3c82" d="M2 2c1-1.500 8-1.500 9 0v9c-1 1.500-8 1.500-9 0z"/><path stroke="#69c" stroke-width="1.500" d="M0 15h14M7 12v3"/><circle cx="10.500" cy="5" r="4.500" fill="#e22"/><path stroke="#fff" stroke-width="2" d="M8 5h5"/></symbol>
<symbol id="up" viewBox="0 0 10 10"><path class="ch" d="M1.500 7L5 3.500 8.500 7"/></symbol>
<symbol id="down" viewBox="0 0 10 10"><path class="ch" d="M1.500 3L5 6.500 8.500 3"/></symbol>
<symbol id="left" viewBox="0 0 10 10"><path class="ch" d="M7 1.500L3.500 5 7 8.500"/></symbol>
<symbol id="right" viewBox="0 0 10 10"><path class="ch" d="M3 1.500L6.500 5 3 8.500"/></symbol>
<symbol id="float" viewBox="0 0 10 10"><path fill="none" stroke="currentColor" d="M3.500 3V.5h6v5H7M.5 4.500h6v4h-6z"/><path stroke="currentColor" d="M3 1h7M0 5h7"/></symbol>
<symbol id="close" viewBox="0 0 10 10"><path stroke="currentColor" stroke-width="1.600" d="M1 1l8 8M9 1L1 9"/></symbol>
<symbol id="pgup" viewBox="0 0 16 16"><path fill="#e6e6e6" stroke="#b8b8b8" stroke-width="2" d="M1 1h14v14H1z"/><path fill="#f4f4f4" stroke="#aaa" d="M3.500 3.500h7l3 3v6h-10z"/><path fill="#8a8a8a" d="M8 5l3.500 5h-7z"/></symbol>
<symbol id="pgdn" viewBox="0 0 16 16"><path fill="#e6e6e6" stroke="#b8b8b8" stroke-width="2" d="M1 1h14v14H1z"/><path fill="#f4f4f4" stroke="#aaa" d="M3.500 3.500h7l3 3v6h-10z"/><path fill="#8a8a8a" d="M8 11l3.500-5h-7z"/></symbol>
<symbol id="nav" viewBox="0 0 16 16"><path fill="#fff" stroke="#1f5f99" stroke-width="2" d="M1 1h14v14H1z"/><path fill="#3b7fd0" d="M2 3h12v2H2z"/><path fill="#aaa" d="M3 6h3v3H3zM3 10h3v3H3z"/><path fill="#dde8f5" d="M7 6h7v8H7z"/></symbol>
</svg>

<header class="titlebar">
  <svg><use href="#logo"/></svg><h1>MestReNova - [Document 1]</h1>
  <div class="winctl">
    <button aria-label="Minimize"><svg class="i10" viewBox="0 0 10 10"><path stroke="#000" d="M0 5.500h10"/></svg></button>
    <button aria-label="Restore"><svg class="i10" viewBox="0 0 10 10"><path fill="none" stroke="#000" d="M2.500 2V.5h7v7H8M.5 2.500h7v7h-7z"/></svg></button>
    <button aria-label="Close"><svg class="i10" viewBox="0 0 10 10"><path stroke="#000" d="M0 0l10 10M10 0L0 10"/></svg></button>
  </div>
</header>
<nav class="menubar">
  <svg class="docicon"><use href="#doclogo"/></svg>
  <button>文件(<u>F</u>)</button><button>编辑(<u>E</u>)</button><button>视图(<u>V</u>)</button><button>数据<u>库</u>（D）</button><button>处理(<u>P</u>)</button><button>分析(<u>A</u>)</button><button>高级(<u>d</u>)</button><button><u>C</u>hemometrics</button><button>Stack</button><button>ElV<u>i</u>S Analysis</button><button>质谱分析</button><button>预测(<u>r</u>)</button><button><u>脚</u>本</button><button>D<u>o</u>cuments</button><button>帮助(<u>H</u>)</button>
  <div class="docctl">
    <button aria-label="Minimize document"><svg class="i10" viewBox="0 0 10 10"><path stroke="currentColor" stroke-width="2" d="M2 8h6"/></svg></button>
    <button aria-label="Restore document"><svg class="i10"><use href="#float"/></svg></button>
    <button aria-label="Close document"><svg class="i10" viewBox="0 0 10 10"><path stroke="currentColor" stroke-width="2.500" d="M2 2l6 6M8 2L2 8"/></svg></button>
  </div>
</nav>
<div class="toolrow">
  <div class="group">
    <button class="b" aria-label="New"><svg><use href="#new"/></svg></button><button class="m on" aria-label="New options"></button>
    <button class="b" aria-label="New page"><svg><use href="#newpage"/></svg></button><i class="sep"></i>
    <button class="b" aria-label="Open"><svg><use href="#open"/></svg></button><button class="m on" aria-label="Recent files"></button>
    <button class="b" aria-label="Save"><svg><use href="#save"/></svg></button><button class="m on" aria-label="Save options"></button><i class="sep"></i>
    <button class="b" aria-label="Print"><svg><use href="#print"/></svg></button>
    <button class="b" aria-label="Export PDF"><svg><use href="#pdf"/></svg></button><i class="sep"></i>
    <button class="b" aria-label="Copy"><svg><use href="#copy"/></svg></button>
    <button class="b" aria-label="Cut"><svg><use href="#cut"/></svg></button>
    <button class="b" aria-label="Paste"><svg><use href="#paste"/></svg></button><i class="sep"></i>
    <button class="b" aria-label="Undo"><svg><use href="#undo"/></svg></button>
    <button class="b" aria-label="Redo"><svg><use href="#redo"/></svg></button><i class="sep"></i>
    <select class="combo zoom" aria-label="Zoom"><option>整个页面</option></select>
  </div>
  <div class="group">
    <button class="b" aria-label="Zoom in"><svg><use href="#zin"/></svg></button>
    <button class="b" aria-label="Zoom out"><svg><use href="#zout"/></svg></button>
    <button class="b" aria-label="Full spectrum"><svg><use href="#zsel"/></svg></button>
    <button class="b" aria-label="Manual zoom"><svg><use href="#zprev"/></svg></button>
    <button class="b" aria-label="Pan"><svg><use href="#hand"/></svg></button>
    <button class="b" aria-label="Expansion"><svg><use href="#zpage"/></svg></button><i class="sep"></i>
    <button class="b" aria-label="Previous zoom"><svg><use href="#zl"/></svg></button>
    <button class="b" aria-label="Next zoom"><svg><use href="#zr"/></svg></button><i class="sep"></i>
    <button class="b" aria-label="Fit to height"><svg><use href="#pkup"/></svg></button>
    <button class="b" aria-label="Fit to highest"><svg><use href="#pkdn"/></svg></button>
    <button class="b" aria-label="Increase intensity"><svg><use href="#pka"/></svg></button>
    <button class="b" aria-label="Decrease intensity"><svg><use href="#pkb"/></svg></button><i class="sep"></i>
    <button class="b" aria-label="Crosshair"><svg><use href="#cross"/></svg></button><i class="sep"></i>
    <button class="b" aria-label="Cuts"><svg><use href="#multi"/></svg></button><button class="m" aria-label="Cut options"></button>
    <button class="b" aria-label="Edit spectrum"><svg><use href="#specedit"/></svg></button><button class="m on" aria-label="Edit options"></button>
  </div>
  <div class="group open">
    <button class="b" aria-label="Edit script"><svg><use href="#shield"/></svg></button><i class="sep"></i>
    <button class="b" aria-label="Run"><svg class="w18"><use href="#play"/></svg></button>
    <button class="b" aria-label="Stop"><svg><use href="#stop"/></svg></button>
  </div>
</div>
<div class="toolrow">
  <div class="group">
    <button class="b tx">f1</button><button class="b tx">f2</button><i class="sep"></i>
    <button class="b tx thin">FID</button><button class="m" aria-label="FID options"></button><i class="sep"></i>
    <button class="b" aria-label="Apodization"><svg><use href="#ph1"/></svg></button>
    <button class="b" aria-label="Fourier transform"><svg><use href="#ft"/></svg></button><button class="m" aria-label="Transform options"></button>
    <button class="b" aria-label="Phase"><svg><use href="#ph2"/></svg></button><button class="m" aria-label="Phase options"></button>
    <button class="b" aria-label="Baseline"><svg><use href="#bl"/></svg></button><button class="m" aria-label="Baseline options"></button><i class="sep"></i>
    <button class="b" aria-label="Reference"><svg><use href="#ref"/></svg></button><button class="m" aria-label="Reference options"></button>
    <button class="b" aria-label="Saved reference"><svg class="w18"><use href="#refc"/></svg></button><button class="m on" aria-label="Saved reference options"></button><i class="sep"></i>
    <button class="b" aria-label="Peak picking"><svg><use href="#int"/></svg></button><button class="m" aria-label="Peak options"></button>
    <button class="b" aria-label="Integration"><svg><use href="#int2"/></svg></button><button class="m" aria-label="Integration options"></button>
    <button class="b" aria-label="Multiplets"><svg><use href="#int3"/></svg></button><button class="m" aria-label="Multiplet options"></button>
    <button class="b" aria-label="Line fitting"><svg><use href="#int4"/></svg></button><button class="m" aria-label="Fitting options"></button>
  </div>
  <div class="group">
    <button class="b" aria-label="Processing template"><svg><use href="#clip"/></svg></button>
    <button class="b" aria-label="Tools"><svg><use href="#tools"/></svg></button><i class="sep"></i>
    <button class="b" aria-label="Template"><svg><use href="#clipc"/></svg></button>
  </div>
  <div class="group">
    <button class="b" aria-label="Select molecule"><svg class="w18"><use href="#hexcur"/></svg></button><button class="m on" aria-label="Select options"></button>
    <button class="b" aria-label="Draw molecule"><svg><use href="#hexpen"/></svg></button>
    <button class="b" aria-label="Chain"><svg><use href="#chain"/></svg></button>
    <button class="b" aria-label="Wedge bond"><svg><use href="#wedge"/></svg></button><button class="m on" aria-label="Bond options"></button>
    <button class="b" aria-label="Atom"><svg class="w18"><use href="#hexat"/></svg></button>
    <button class="b" aria-label="Ring"><svg><use href="#benz"/></svg></button><button class="m on" aria-label="Ring options"></button>
    <button class="b" aria-label="Charge"><svg class="w18"><use href="#hexadd"/></svg></button><button class="m on" aria-label="Charge options"></button>
    <button class="b" aria-label="3D molecule"><svg><use href="#mol"/></svg></button><button class="m" aria-label="3D options"></button>
    <button class="b" aria-label="Mirror"><svg><use href="#mirror"/></svg></button>
    <button class="b" aria-label="Label"><svg><use href="#hexlab"/></svg></button>
    <button class="b" aria-label="Find structure"><svg><use href="#hexfind"/></svg></button>
  </div>
  <div class="group">
    <button class="b" aria-label="Superimpose"><svg><use href="#p1"/></svg></button>
    <button class="b" aria-label="Active trace"><svg><use href="#p2"/></svg></button>
    <button class="b" aria-label="Separate"><svg><use href="#p3"/></svg></button><i class="sep"></i>
    <button class="b" aria-label="Stacked view"><svg><use href="#p4"/></svg></button>
  </div>
  <div class="group open">
    <button class="b" aria-label="MS browser"><svg><use href="#winchart"/></svg></button>
    <button class="b" aria-label="Import"><svg><use href="#dl"/></svg></button>
    <button class="b" aria-label="Timer"><svg><use href="#clock"/></svg></button><i class="sep"></i>
    <button class="b" aria-label="Chromatogram"><svg><use href="#boxgo"/></svg></button>
    <button class="b" aria-label="New chromatogram"><svg><use href="#boxplus"/></svg></button><button class="m" aria-label="Chromatogram options"></button>
    <button class="b" aria-label="Peak settings"><svg><use href="#gearpk"/></svg></button><button class="m" aria-label="Peak settings options"></button><i class="sep"></i>
    <button class="b" aria-label="Add spectrum"><svg><use href="#boxadd"/></svg></button>
    <button class="b" aria-label="Spectrum selection"><svg><use href="#boxusr"/></svg></button>
    <button class="b" aria-label="MS crosshair"><svg><use href="#cross"/></svg></button><button class="m" aria-label="Crosshair options"></button><i class="sep"></i>
    <button class="b" aria-label="Retention time"><svg><use href="#peakclk"/></svg></button><i class="sep"></i>
    <button class="b" aria-label="Mass analysis"><svg><use href="#drops"/></svg></button><button class="m" aria-label="Mass options"></button><i class="sep"></i>
    <button class="b" aria-label="Molecule match"><svg><use href="#hexok"/></svg></button><button class="m" aria-label="Match options"></button>
    <button class="b" aria-label="Match preview"><svg><use href="#hexok2"/></svg></button><i class="sep"></i>
    <button class="b" aria-label="Mass calculator"><svg><use href="#calc"/></svg></button><button class="m on" aria-label="Calculator options"></button><i class="sep"></i>
    <button class="b" aria-label="Mass peaks"><svg><use href="#pkm"/></svg></button>
    <button class="b" aria-label="Peak shape"><svg><use href="#pkf"/></svg></button><button class="m" aria-label="Shape options"></button>
    <button class="b" aria-label="Fragments"><svg><use href="#boxbolt"/></svg></button><button class="m" aria-label="Fragment options"></button>
    <button class="b" aria-label="Exclude"><svg><use href="#boxno"/></svg></button><button class="m" aria-label="Exclude options"></button>
  </div>
</div>

<main class="work">
  <aside class="side">
    <div class="vgroup">
      <div><button class="b" aria-label="Order"><svg><use href="#order"/></svg></button><button class="m" aria-label="Order options"></button></div>
      <div><button class="b" aria-label="Align objects"><svg><use href="#align"/></svg></button><button class="m" aria-label="Align options"></button></div>
      <div><button class="b" aria-label="Distribute"><svg><use href="#dist"/></svg></button><button class="m" aria-label="Distribute options"></button></div>
    </div>
    <div class="vgroup">
      <div><button class="b" aria-label="Stack plot"><svg><use href="#stk"/></svg></button><button class="m" aria-label="Stack options"></button></div>
      <div><button class="b" aria-label="Stacked"><svg><use href="#stk"/></svg></button></div>
      <div><button class="b" aria-label="Single"><svg><use href="#sgl"/></svg></button></div>
      <hr>
      <div><button class="b" aria-label="Pick trace"><svg><use href="#st1"/></svg></button></div>
      <div><button class="b" aria-label="Number traces"><svg><use href="#st2"/></svg></button></div>
      <div><button class="b" aria-label="Multiply"><svg><use href="#xx"/></svg></button><button class="m" aria-label="Multiply options"></button></div>
      <div><button class="b" aria-label="Divide"><svg><use href="#divi"/></svg></button><button class="m" aria-label="Divide options"></button></div>
      <hr>
      <div><button class="b" aria-label="Reorder"><svg><use href="#updn"/></svg></button></div>
      <div><button class="b" aria-label="Show"><svg><use href="#eye"/></svg></button><button class="m" aria-label="Show options"></button></div>
      <div><button class="b" aria-label="Pin"><svg><use href="#pin"/></svg></button><button class="m" aria-label="Pin options"></button></div>
      <hr>
      <div><button class="b" aria-label="Stack table"><svg><use href="#tbl"/></svg></button></div>
    </div>
    <div class="vgroup open">
      <div><button class="b" aria-label="Layout"><svg><use href="#chk"/></svg></button><button class="m" aria-label="Layout options"></button></div>
      <div><button class="b" aria-label="Traces"><svg><use href="#frm"/></svg></button><button class="m" aria-label="Trace options"></button></div>
    </div>
  </aside>
  <section class="dock">
    <div class="dockhead"><h2>页面</h2><button aria-label="Float"><svg class="i10"><use href="#float"/></svg></button><button aria-label="Close panel"><svg class="i10"><use href="#close"/></svg></button></div>
    <div class="pages">
      <div class="list"><div class="item"><span>1.</span><div class="thumb"></div></div></div>
      <div class="vbar faint"><button aria-label="Scroll up"><svg class="i10"><use href="#up"/></svg></button><div class="track"></div><button aria-label="Scroll down"><svg class="i10"><use href="#down"/></svg></button></div>
    </div>
    <div class="tabs"><button class="active">页面</button><button>Data Browser</button></div>
  </section>
  <section class="view">
    <div class="canvas"><div class="sheet"><div class="margin"></div></div></div>
    <div class="vbar">
      <button aria-label="Scroll up"><svg class="i10"><use href="#up"/></svg></button>
      <div class="track"><div class="before"></div><div class="handle"></div><div class="after"></div></div>
      <button aria-label="Scroll down"><svg class="i10"><use href="#down"/></svg></button>
      <button aria-label="Previous page"><svg><use href="#pgup"/></svg></button>
      <button aria-label="Next page"><svg><use href="#pgdn"/></svg></button>
    </div>
    <div class="hbar"><button aria-label="Scroll left"><svg class="i10"><use href="#left"/></svg></button><div class="track"><div class="before"></div><div class="handle"></div><div class="after"></div></div><button aria-label="Scroll right"><svg class="i10"><use href="#right"/></svg></button></div>
    <button class="corner" aria-label="Page navigator"><svg><use href="#nav"/></svg></button>
  </section>
</main>

<div class="toolrow bottom">
  <div class="group">
    <span class="split"><button class="b" aria-label="Select"><svg><use href="#cur"/></svg></button><button class="m on" aria-label="Select options"></button></span><i class="sep"></i>
    <button class="b" aria-label="Fill colour"><svg><use href="#fill"/></svg></button><button class="m on" aria-label="Fill options"></button>
    <button class="b" aria-label="Line colour"><svg><use href="#line"/></svg></button><button class="m on" aria-label="Line options"></button>
  </div>
  <div class="group">
    <button class="b" aria-label="Grow font"><svg><use href="#fa1"/></svg></button>
    <button class="b" aria-label="Shrink font"><svg><use href="#fa2"/></svg></button>
    <button class="b" aria-label="Reset font"><svg><use href="#fa3"/></svg></button><i class="sep"></i>
    <span class="split"><button class="b" aria-label="Align text"><svg><use href="#al"/></svg></button><button class="m on" aria-label="Align text options"></button></span>
    <button class="b bold">B</button><button class="m on" aria-label="Style options"></button>
    <button class="b xsub">X<sub>2</sub></button><button class="m on" aria-label="Script options"></button><i class="sep"></i>
    <button class="b fcol">A</button><button class="m on" aria-label="Font colour options"></button>
    <select class="combo font" aria-label="Font"><option>Arial</option></select><select class="combo size" aria-label="Font size"><option>12</option></select>
  </div>
  <div class="group open">
    <button class="b" aria-label="Save to database"><svg><use href="#dbs"/></svg></button>
    <button class="b" aria-label="Save table"><svg><use href="#gs"/></svg></button>
    <button class="b navy" aria-label="View database"><svg><use href="#dbe"/></svg></button>
    <button class="b navy" aria-label="Search database"><svg><use href="#dbq"/></svg></button>
    <button class="b" aria-label="Structure search"><svg><use href="#f1"/></svg></button>
    <button class="b" aria-label="Substructure search"><svg><use href="#f2"/></svg></button>
    <button class="b" aria-label="Formula search"><svg><use href="#f3"/></svg></button>
    <button class="b" aria-label="Shift search"><svg><use href="#f4"/></svg></button>
    <button class="b" aria-label="Multiplet search"><svg><use href="#f5"/></svg></button>
    <button class="b" aria-label="Spectrum search"><svg><use href="#f6"/></svg></button>
    <button class="b" aria-label="Mass search"><svg><use href="#f7"/></svg></button>
    <button class="b" aria-label="Number search"><svg><use href="#f8"/></svg></button>
    <button class="b" aria-label="Date search"><svg><use href="#f9"/></svg></button>
    <button class="b" aria-label="Time search"><svg><use href="#f10"/></svg></button>
    <button class="b" aria-label="Text search"><svg><use href="#f11"/></svg></button>
    <button class="b" aria-label="Query search"><svg><use href="#f12"/></svg></button><i class="sep"></i>
    <button class="b" aria-label="Remove rows"><svg><use href="#gx"/></svg></button>
    <button class="b" aria-label="Clear table"><svg><use href="#gx"/></svg></button><i class="sep"></i>
    <button class="b navy" aria-label="Open database"><svg><use href="#dbf"/></svg></button>
    <button class="b" aria-label="Database info"><svg><use href="#dbi"/></svg></button>
    <button class="b" aria-label="Add database"><svg><use href="#dbp"/></svg></button>
    <button class="b" aria-label="Delete database"><svg><use href="#dbx"/></svg></button>
    <button class="b" aria-label="Database settings"><svg><use href="#dbg"/></svg></button>
    <button class="b navy" aria-label="Connect database"><svg><use href="#dbb"/></svg></button>
  </div>
</div>
<footer class="status">
  <div class="cell c1"><b>Signature:</b><svg><use href="#sig"/></svg></div>
  <div class="cell c2"><svg><use href="#badge"/></svg></div>
  <div class="cell c3"><b>许可文件:</b><svg><use href="#ok"/></svg></div>
  <div class="cell c4"><b>DB:</b><svg><use href="#dbno"/></svg></div>
</footer>

<div class="watermark">
  <svg viewBox="0 0 86 87"><linearGradient id="wm" x1="0" x2="1"><stop offset="0" stop-color="#4fc0f0"/><stop offset=".45" stop-color="#14a2e6"/><stop offset="1" stop-color="#0f8ad2"/></linearGradient><path fill="none" stroke="url(#wm)" stroke-width="7" stroke-linecap="round" stroke-linejoin="round" d="M4 83V4H44C94 7 94 80 44 83H21V19H42C74 21 74 65 42 67"/></svg>
  <strong>微当下载</strong>
  <span>WWW.WEIDOWN.COM</span>
</div>
</body>
</html>
```
FILE: styles.css
```css
* { box-sizing: border-box; }
body {
  margin: 0;
  height: 100vh;
  display: flex;
  flex-direction: column;
  overflow: hidden;
  position: relative;
  background: #f0f0f0;
  color: #000;
  font: 12px/16px "Noto Sans", "Noto Sans CJK SC", sans-serif;
}
button {
  border: 0;
  padding: 0;
  margin: 0;
  background: none;
  color: inherit;
  font: inherit;
  display: flex;
  align-items: center;
  justify-content: center;
}
svg { flex: none; display: block; width: 16px; height: 16px; overflow: visible; }
svg.i10 { width: 10px; height: 10px; }
svg.w18 { width: 18px; }
svg.defs { display: none; }
h1, h2 { margin: 0; font: inherit; }

/* icon strokes */
.g, .g2, .g3, .n, .n2, .r, .y3, .ch { fill: none; }
.g { stroke: #999; }
.g2 { stroke: #9a9a9a; stroke-width: 1.5px; }
.g3 { stroke: #808080; stroke-width: 2px; }
.gw { fill: #f8f8f8; stroke: #a0a0a0; }
.gf { fill: #9a9a9a; }
.df { fill: #7c7c7c; }
.n { stroke: #0a3c82; }
.n2 { stroke: #1c4a8a; stroke-width: 1.5px; }
.r { stroke: #c8202c; }
.y3 { stroke: #f5b32e; stroke-width: 3px; }
.ch { stroke: currentColor; stroke-width: 2px; }
.it { font: bold 9px "Open Sans", sans-serif; }
.nv { fill: #0a3c82; }
.rd { fill: #c8202c; }
.fs { font: bold 8px "Liberation Serif", serif; fill: #999; }
.fl { font: bold 13px "Liberation Serif", serif; fill: #222; }
.ft { font: bold 15px "Liberation Serif", serif; fill: #222; }
.dim { fill: #aaa; }
.dk { fill: #555; }

/* title and menus */
.titlebar { height: 24px; flex: none; display: flex; align-items: center; padding-left: 2px; background: #fff; }
.titlebar h1 { margin-left: 5px; flex: 1; }
.winctl { display: flex; align-self: stretch; padding-right: 2px; }
.winctl button { width: 46px; padding-bottom: 4px; }
.menubar { height: 22px; flex: none; display: flex; align-items: center; padding-left: 2px; background: #fff; border-bottom: 1px solid #eee; }
.menubar .docicon { width: 12px; height: 16px; margin-right: 2px; }
.menubar > button { padding: 0 9px 0 8px; height: 20px; white-space: nowrap; }
.menubar u { text-underline-offset: 1px; }
.docctl { margin-left: auto; display: flex; gap: 1px; padding-right: 1px; color: #7a8a99; }
.docctl button { width: 17px; height: 18px; border: 1px solid #e2e2e2; }

/* toolbars */
.toolrow { height: 26px; flex: none; display: flex; border-top: 1px solid #fff; border-bottom: 1px solid #b4b4b4; }
.toolrow.bottom { border-bottom: 0; padding-bottom: 1px; }
.group { display: flex; align-items: center; padding-right: 2px; border-right: 1px solid #b4b4b4; }
.group::before { content: ""; width: 2px; height: 18px; margin: 0 3px 0 4px; background: repeating-linear-gradient(#b8b8b8 0 2px, transparent 2px 4px); }
.bottom .group:first-child::before { margin-right: 4px; }
.open { border-color: transparent; }
.b { width: 23px; height: 22px; flex: none; color: #858585; }
.navy { color: #0a3c82; }
.m { width: 12px; height: 22px; flex: none; color: #6d6d6d; }
.m.on { color: #1a1a1a; }
.m::after { content: ""; border: 4px solid transparent; border-top-color: currentColor; border-bottom: 0; }
.sep { width: 1px; height: 16px; margin: 0 2px 0 3px; flex: none; background: #d0d0d0; }
.tx { font: bold 16px "Liberation Sans", sans-serif; color: #999; }
.thin { font-size: 12px; }
.split { display: flex; height: 22px; background: #c0dcf3; border: 1px solid #90c8f6; }
.split .b { width: 22px; height: 20px; border-right: 1px solid #90c8f6; }
.split .m { width: 11px; height: 20px; }
.bold { color: #111; font: bold 20px "Liberation Serif", serif; }
.xsub { color: #222; font: 600 14px "Open Sans", sans-serif; }
.xsub sub { color: #d33; font-size: 8px; align-self: flex-end; }
.fcol { color: #000; font: bold 12px "Liberation Serif", serif; }
.combo {
  appearance: none;
  height: 20px;
  margin: 0;
  padding: 0 2px;
  border: 1px solid #7a7a7a;
  border-radius: 0;
  color: #000;
  background: #fff url('data:image/svg+xml,<svg xmlns="http://www.w3.org/2000/svg" width="9" height="6"><path d="M.5.500l4 4 4-4" fill="none" stroke="%23444"/></svg>') no-repeat right 4px center;
  font: 12px/16px "Noto Sans CJK SC", sans-serif;
}
.zoom { width: 75px; }
.font {
  width: 212px;
  border-color: #adadad;
  background: #e1e1e1 url('data:image/svg+xml,<svg xmlns="http://www.w3.org/2000/svg" width="8" height="4"><path d="M0 0h8L4 4z"/></svg>') no-repeat right 4px center;
  font-family: "Liberation Mono", monospace;
  font-size: 10px;
}
.size { width: 39px; font-family: "Liberation Mono", monospace; font-size: 10px; }

/* working area */
.work { flex: 1; min-height: 0; display: flex; border-bottom: 1px solid #8a8c93; }
.side { width: 39px; flex: none; border-right: 1px solid #b4b4b4; }
.vgroup { border-bottom: 1px solid #b4b4b4; padding-bottom: 1px; }
.vgroup.open { border-color: transparent; }
.vgroup::before { content: ""; display: block; width: 31px; height: 2px; margin: 4px 4px; background: repeating-linear-gradient(90deg, #b8b8b8 0 2px, transparent 2px 4px); }
.vgroup div { display: flex; justify-content: center; height: 22px; }
.vgroup hr { height: 1px; margin: 2px 5px 3px; border: 0; background: #d0d0d0; }
.dock { width: 324px; flex: none; display: flex; flex-direction: column; padding: 1px 4px 0 0; }
.dockhead { height: 20px; flex: none; display: flex; align-items: center; gap: 6px; padding: 0 3px 0 4px; border: 1px solid #b4b4b4; background: #d9d9d9; }
.dockhead h2 { flex: 1; }
.pages { flex: 1; min-height: 0; margin-top: 1px; display: flex; border: 1px solid #83868e; }
.list { flex: 1; padding: 5px 6px; background: #a5a8b0; }
.item { border: 1px solid #17365f; padding: 6px 5px 4px; color: #17365f; font: bold 12px/11px "Liberation Mono", monospace; }
.item span { display: block; }
.thumb { height: 196px; border: 1px solid #83868e; background: #fff; }
.vbar { width: 17px; flex: none; display: flex; flex-direction: column; color: #505050; background: #f0f0f0; }
.vbar button { height: 17px; flex: none; }
.faint { color: #bfbfbf; }
.track { flex: 1; display: flex; }
.vbar .track { flex-direction: column; }
.handle { background: #cdcdcd; }
.vbar .before { flex: 333; }
.vbar .handle { flex: 150; }
.vbar .after { flex: 333; }
.tabs { height: 19px; flex: none; display: flex; align-items: flex-start; }
.tabs button { height: 18px; padding: 2px 11px 0; border-bottom: 1px solid #d9d9d9; font: 10px/12px "Liberation Mono", monospace; }
.tabs button.active { height: 19px; padding: 0 12px; border: 0; background: #fff; font: 12px/16px "Noto Sans CJK SC", sans-serif; }
.view { flex: 1; min-width: 0; display: grid; grid-template: minmax(0, 1fr) 17px / minmax(0, 1fr) 17px; border-left: 1px solid #83868e; border-right: 1px solid #83868e; }
.canvas { padding: 18px 0 16px; display: flex; justify-content: center; overflow: hidden; background: #a5a8b0; }
.sheet { height: 100%; aspect-ratio: 24 / 17; padding: 20px; background: #fff; box-shadow: 7px 12px 0 #535458; }
.margin { height: 100%; border: 1px solid #e8e8e8; }
.hbar { display: flex; color: #505050; }
.hbar button { width: 17px; flex: none; }
.hbar .before { flex: 511; }
.hbar .handle { flex: 483; }
.hbar .after { flex: 510; }

/* status line */
.status { height: 26px; flex: none; display: flex; justify-content: flex-end; align-items: center; font-family: "Open Sans", "Noto Sans CJK SC", sans-serif; }
.cell { height: 22px; display: flex; align-items: center; padding-left: 6px; border-left: 1px solid #d4d4d4; }
.cell svg { margin-left: auto; }
.c1 { width: 98px; padding-right: 2px; }
.c2 { width: 38px; padding-right: 15px; }
.c3 { width: 83px; padding: 0 3px 0 4px; }
.c4 { width: 53px; padding: 0 3px 0 4px; }

/* site mark above the window */
.watermark { position: absolute; right: 33px; bottom: 30px; width: 110px; display: flex; flex-direction: column; align-items: center; color: #555; pointer-events: none; }
.watermark svg { width: 86px; height: 87px; margin-bottom: 6px; }
.watermark strong { font: 900 21px/24px "Noto Sans CJK SC", sans-serif; }
.watermark span { margin-top: 2px; color: #666; font: bold 10px/16px "Liberation Serif", serif; }
```
